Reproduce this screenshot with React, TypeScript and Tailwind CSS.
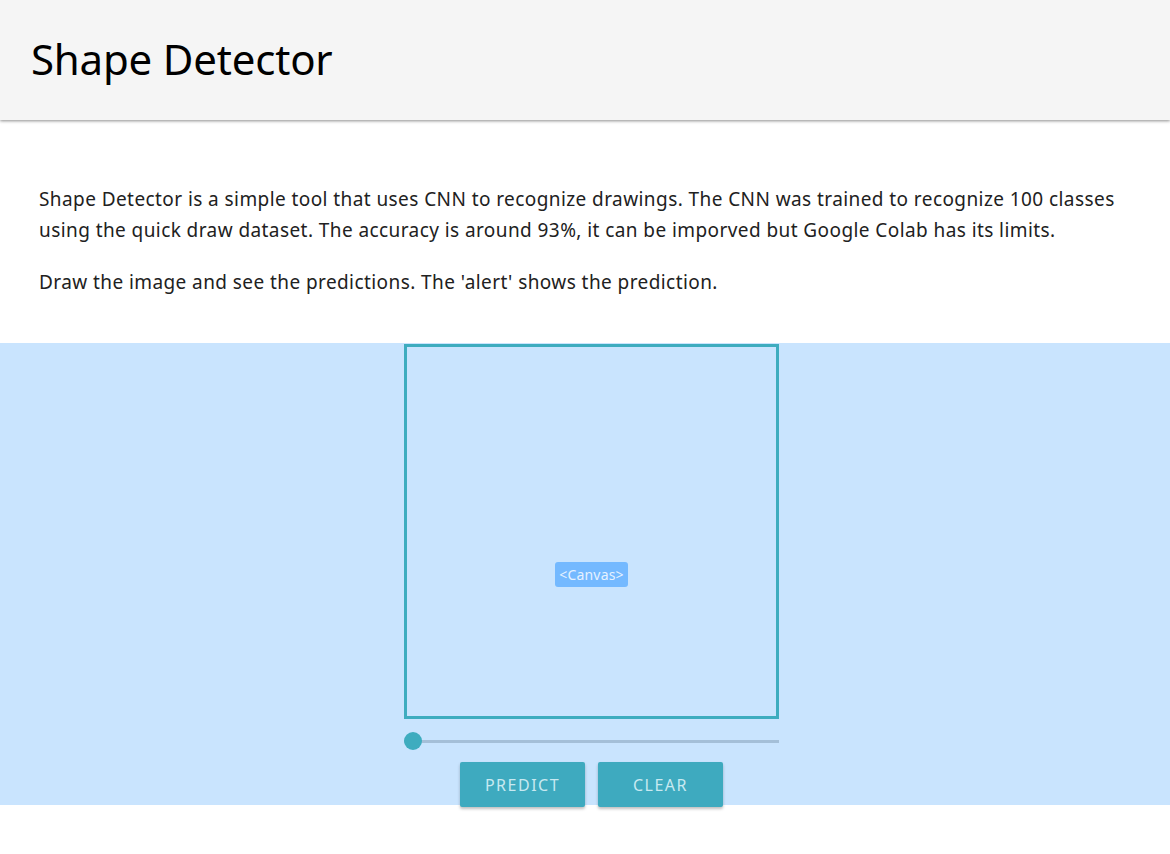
import React from "react";

export default function App() {
  return (
    <div className="min-h-[854px] bg-white" style={{ fontFamily: '"Noto Sans", "Open Sans", sans-serif' }}>
      <header className="h-[120px] bg-[#f5f5f5] shadow-[0_1px_3px_rgba(0,0,0,0.45)] flex items-center pl-[31px] relative z-10">
        <h1 className="text-[42px] leading-none text-black tracking-[-0.2px] pb-[3px]">Shape Detector</h1>
      </header>
      <div className="px-[39px] pt-[64px] text-[19px] leading-[31px] text-[#212121] tracking-[0.42px]">
        <p>
          Shape Detector is a simple tool that uses CNN to recognize drawings. The CNN was trained to recognize 100 classes using the quick draw dataset. The accuracy is around 93%, it can be imporved but Google Colab has its limits.
        </p>
        <p className="mt-[21px]">Draw the image and see the predictions. The 'alert' shows the prediction.</p>
      </div>
      <section className="mt-[45px] bg-[#c9e4fe] h-[462px] flex flex-col items-center pl-[13px]">
        <div className="w-[375px] h-[375px] shrink-0 mt-[1px] border-[3px] border-[#3eacbf] flex items-center justify-center">
          <span className="bg-[#74b9ff] text-[#e6f2ff] text-[14px] leading-[25px] px-[4px] rounded-[3px] mt-[86px] tracking-[0.2px]">
            &lt;Canvas&gt;
          </span>
        </div>
        <div className="w-[375px] h-[18px] shrink-0 mt-[13px] relative flex items-center">
          <div className="h-[3px] w-full bg-[#a4bfd8]" />
          <div className="absolute left-0 w-[18px] h-[18px] rounded-full bg-[#3eacbf]" />
        </div>
        <div className="flex shrink-0 gap-[13px] mt-[12px]">
          <button className="w-[125px] h-[45px] bg-[#3eaabf] text-[#c8e9f1] text-[16px] tracking-[1.5px] rounded-[2px] shadow-[0_2px_3px_rgba(0,0,0,0.25)]">PREDICT</button>
          <button className="w-[125px] h-[45px] bg-[#3eaabf] text-[#c8e9f1] text-[16px] tracking-[1.5px] rounded-[2px] shadow-[0_2px_3px_rgba(0,0,0,0.25)]">CLEAR</button>
        </div>
      </section>
    </div>
  );
}
